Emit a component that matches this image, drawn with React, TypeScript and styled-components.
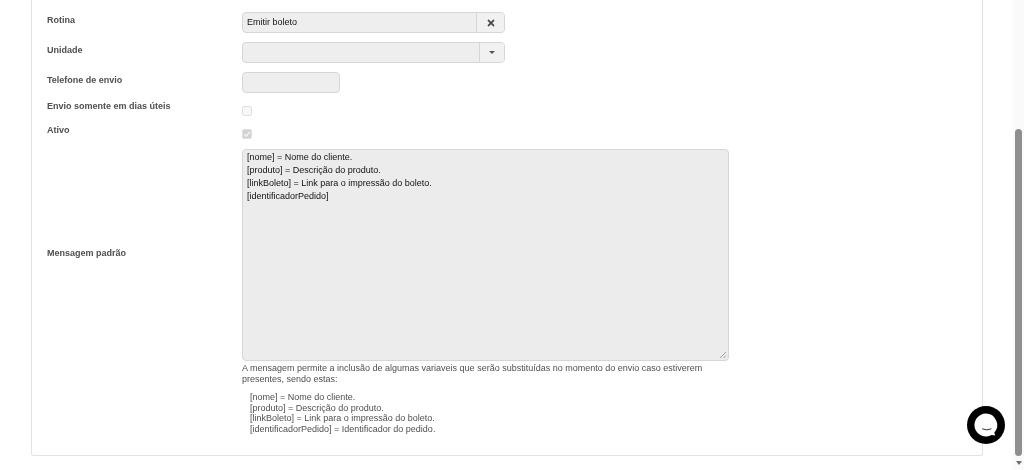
import { createGlobalStyle, styled } from 'styled-components'
import { FaTimes } from 'react-icons/fa'

const Global = createGlobalStyle`
  html, body {
    margin: 0;
    height: 100%;
    overflow: hidden;
    background: #fff;
  }
  body {
    font-family: "Liberation Sans", Arial, sans-serif;
    font-size: 9px;
    color: #333;
  }
`

const Page = styled.div`
  display: flex;
  width: 1024px;
  height: 470px;
  filter: blur(0.35px);
`

const Main = styled.main`
  flex: 1;
  padding: 0 30px 14px 31px;
`

const Card = styled.section`
  box-sizing: border-box;
  height: 456px;
  padding: 12px 0 0 15px;
  border: 1px solid #e3e3e3;
  border-top: 0;
  border-radius: 0 0 3px 3px;
`

const Row = styled.div<{ $height: number; $gap?: number; $center?: boolean }>`
  display: grid;
  grid-template-columns: 195px 1fr;
  height: ${p => p.$height}px;
  margin-bottom: ${p => p.$gap ?? 0}px;
  align-items: ${p => (p.$center ? 'center' : 'start')};
`

const Label = styled.label<{ $top?: number; $up?: number }>`
  padding-top: ${p => p.$top ?? 0}px;
  margin-top: ${p => -(p.$up ?? 0)}px;
  font-size: 9px;
  line-height: 12px;
  font-weight: 700;
  color: #4f4f4f;
`

const Group = styled.div<{ $width: number }>`
  display: flex;
  box-sizing: border-box;
  width: ${p => p.$width}px;
  height: 21px;
  border: 1px solid #d6d6d6;
  border-radius: 4px;
  background: #eee;
  overflow: hidden;
`

const Value = styled.span`
  flex: 1;
  padding-left: 4px;
  font-size: 9px;
  line-height: 18px;
  color: #111;
`

const Addon = styled.span<{ $width: number }>`
  display: flex;
  align-items: center;
  justify-content: center;
  width: ${p => p.$width}px;
  border-left: 1px solid #d6d6d6;
  background: #f1f1f1;
  color: #4a4a4a;
`

const Caret = styled.i`
  width: 0;
  height: 0;
  border-style: solid;
  border-width: 3px 3px 0;
  border-color: #555 transparent transparent;
`

const Box = styled.span<{ $checked?: boolean; $top: number }>`
  display: flex;
  align-items: center;
  justify-content: center;
  box-sizing: border-box;
  width: 10px;
  height: 10px;
  margin-top: ${p => p.$top}px;
  border: 1px solid #e0e0e0;
  border-radius: 2px;
  background: ${p => (p.$checked ? '#d2d2d2' : '#f7f7f7')};
`

const TextArea = styled.div`
  position: relative;
  box-sizing: border-box;
  width: 487px;
  height: 212px;
  padding: 1px 4px;
  border: 1px solid #d6d6d6;
  border-radius: 4px;
  background: #ececec;
  font-size: 9px;
  line-height: 13px;
  color: #111;
`

const Grip = styled.svg`
  position: absolute;
  right: 1px;
  bottom: 1px;
`

const Help = styled.p`
  width: 487px;
  margin: 2px 0 0;
  font-size: 9px;
  line-height: 11px;
  color: #4f4f4f;
`

const VarList = styled.ul`
  margin: 7px 0 0;
  padding: 0 0 0 8px;
  list-style: none;
  font-size: 9px;
  line-height: 10.5px;
  color: #4f4f4f;
`

const Scrollbar = styled.aside`
  display: flex;
  flex-direction: column;
  align-items: center;
  box-sizing: border-box;
  width: 11px;
  padding-top: 129px;
  background: #fafafa;
`

const Thumb = styled.div`
  width: 7px;
  height: 327px;
  border-radius: 4px;
  background: #8f8f8f;
`

const Arrow = styled.i`
  width: 0;
  height: 0;
  margin-top: 5px;
  border-style: solid;
  border-width: 4px 3.5px 0;
  border-color: #6f6f6f transparent transparent;
`

const Chat = styled.button`
  position: absolute;
  left: 967px;
  top: 406px;
  width: 38px;
  height: 38px;
  padding: 0;
  border: 0;
  background: none;
`

const vars = [
  '[nome] = Nome do cliente.',
  '[produto] = Descrição do produto.',
  '[linkBoleto] = Link para o impressão do boleto.',
]

export default function App() {
  return (
    <Page>
      <Global />
      <Main>
        <Card>
          <Row $height={21} $gap={9}>
            <Label $top={2}>Rotina</Label>
            <Group $width={263}>
              <Value>Emitir boleto</Value>
              <Addon $width={27}>
                <FaTimes size={10} />
              </Addon>
            </Group>
          </Row>
          <Row $height={21} $gap={9}>
            <Label $top={2}>Unidade</Label>
            <Group $width={263}>
              <Value />
              <Addon $width={24}>
                <Caret />
              </Addon>
            </Group>
          </Row>
          <Row $height={21} $gap={7}>
            <Label $top={2}>Telefone de envio</Label>
            <Group $width={98} />
          </Row>
          <Row $height={16} $gap={8}>
            <Label>Envio somente em dias úteis</Label>
            <Box $top={6} />
          </Row>
          <Row $height={16} $gap={9}>
            <Label>Ativo</Label>
            <Box $top={5} $checked>
              <svg width="8" height="8" viewBox="0 0 8 8">
                <path d="M1.2 4.2 3.2 6.2 6.8 1.8" fill="none" stroke="#f4f4f4" strokeWidth="1.4" />
              </svg>
            </Box>
          </Row>
          <Row $height={212} $center>
            <Label $up={5}>Mensagem padrão</Label>
            <TextArea>
              {vars.map(v => (
                <div key={v}>{v}</div>
              ))}
              <div>[identificadorPedido]</div>
              <Grip width="8" height="8" viewBox="0 0 8 8">
                <path d="M1 7 7 1M4.5 7 7 4.5" stroke="#999" strokeWidth="0.9" />
              </Grip>
            </TextArea>
          </Row>
          <Row $height={80}>
            <span />
            <div>
              <Help>
                A mensagem permite a inclusão de algumas variaveis que serão substituídas no momento do envio caso estiverem presentes, sendo estas:
              </Help>
              <VarList>
                {vars.map(v => (
                  <li key={v}>{v}</li>
                ))}
                <li>[identificadorPedido] = Identificador do pedido.</li>
              </VarList>
            </div>
          </Row>
        </Card>
      </Main>
      <Scrollbar>
        <Thumb />
        <Arrow />
      </Scrollbar>
      <Chat aria-label="Chat">
        <svg width="38" height="38" viewBox="0 0 38 38">
          <circle cx="19" cy="19" r="19" fill="#000" />
          <path d="M19 7.5a11.5 11.5 0 1 0 5.6 21.5l3.6.6-.9-3A11.5 11.5 0 0 0 19 7.5Z" fill="#fff" />
          <path d="M15.2 22.8q4.6 2.2 9.2 0" fill="none" stroke="#333" strokeWidth="1" />
        </svg>
      </Chat>
    </Page>
  )
}
